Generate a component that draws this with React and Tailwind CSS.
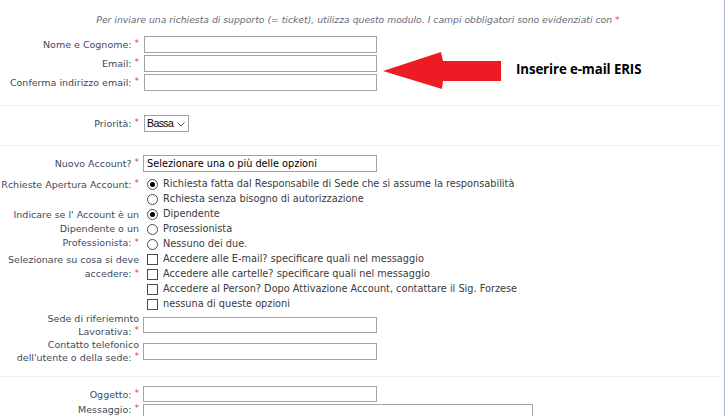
import React from "react";

const Star = () => <span className="text-[#e8424a] text-[9px] align-top ml-[3px] relative top-[-1px]">*</span>;

function Label({ children, className = "" }) {
  return (
    <div className={"text-right text-[#3e4a5c] leading-[13px] pr-[1px] " + className}>
      {children}
      <Star />
    </div>
  );
}

function TextInput({ w = "w-[233px]", h = "h-[17px]", children }) {
  return (
    <div className={`${w} ${h} border border-[#a3a3a3] bg-white flex items-center px-[2px] text-black text-[9.75px] leading-[12px] overflow-hidden whitespace-nowrap`}>
      {children}
    </div>
  );
}

function Radio({ checked }) {
  return (
    <span className="w-[11px] h-[11px] rounded-full border border-[#4a4a4a] flex items-center justify-center bg-white shrink-0">
      {checked && <span className="w-[5px] h-[5px] rounded-full bg-black" />}
    </span>
  );
}

function Check() {
  return <span className="w-[11px] h-[11px] border border-[#4a4a4a] bg-white shrink-0" />;
}

function Option({ kind, checked, children }) {
  return (
    <div className="h-[15px] flex items-center gap-[5px] pl-[4px] text-[#3b3b3b] text-[9.75px] whitespace-nowrap">
      {kind === "radio" ? <Radio checked={checked} /> : <Check />}
      <span>{children}</span>
    </div>
  );
}

function Row({ label, children, className = "", align = "items-center" }) {
  return (
    <div className={`grid grid-cols-[140px_1fr] gap-x-[3px] ${align} ${className}`}>
      {label}
      <div>{children}</div>
    </div>
  );
}

const Sep = ({ className = "" }) => <div className={"h-px bg-[#eceef1] w-[720px] " + className} />;

export default function App() {
  return (
    <div className="w-[728px] h-[416px] overflow-hidden bg-white relative font-['DejaVu_Sans',sans-serif] text-[9.5px]">
      <div className="w-[725px] -mt-[4px] pt-[4px] border-t border-r border-[#a6b4d4] rounded-tr-[6px] min-h-[440px]">
        <div className="pt-[13px] h-[30px] text-center italic text-[#666b78] text-[9.25px] leading-[12px] pr-[8px]">
          Per inviare una richiesta di supporto (= ticket), utilizza questo modulo. I campi obbligatori sono evidenziati con <span className="text-[#e8424a] not-italic">*</span>
        </div>

        <div className="mt-[5px] flex flex-col gap-[2px]">
          <Row label={<Label>Nome e Cognome:</Label>}><div className="pl-[1px]"><TextInput /></div></Row>
          <Row label={<Label>Email:</Label>}><div className="pl-[1px]"><TextInput /></div></Row>
          <Row label={<Label>Conferma indirizzo email:</Label>}><div className="pl-[1px]"><TextInput /></div></Row>
        </div>

        <Sep className="mt-[14px]" />

        <Row className="mt-[9px]" label={<Label>Priorità:</Label>}>
          <div className="pl-[1px]">
            <div className="w-[45px] h-[17px] border border-[#a3a3a3] flex items-center justify-between pl-[2px] pr-[3px] font-['Liberation_Sans',sans-serif] text-[10.5px] text-black tracking-[-0.6px]">
              <span>Bassa</span>
              <svg width="8" height="5" viewBox="0 0 8 5" className="mt-[1px]"><path d="M0.5 0.5 L4 4 L7.5 0.5" fill="none" stroke="#555" strokeWidth="1" /></svg>
            </div>
          </div>
        </Row>

        <Sep className="mt-[13px]" />

        <Row className="mt-[9px]" label={<Label>Nuovo Account?</Label>}>
          <TextInput w="w-[234px]"><span className="pl-[1px]">Selezionare una o più delle opzioni</span></TextInput>
        </Row>

        <div className="mt-[5px]">
          <Row align="items-start" label={<Label className="pt-[1px]">Rchieste Apertura Account:</Label>}>
            <Option kind="radio" checked>Richiesta fatta dal Responsabile di Sede che si assume la responsabilità</Option>
            <Option kind="radio">Rchiesta senza bisogno di autorizzazione</Option>
          </Row>
          <Row align="items-start" label={<Label className="pt-[1px] leading-[14px]">Indicare se l' Account è un<br />Dipendente o un<br />Professionista:</Label>}>
            <Option kind="radio" checked>Dipendente</Option>
            <Option kind="radio">Prosessionista</Option>
            <Option kind="radio">Nessuno dei due.</Option>
          </Row>
          <Row align="items-start" label={<Label className="pt-[1px] leading-[14px]">Selezionare su cosa si deve<br />accedere:</Label>}>
            <Option kind="check">Accedere alle E-mail? specificare quali nel messaggio</Option>
            <Option kind="check">Accedere alle cartelle? specificare quali nel messaggio</Option>
            <Option kind="check">Accedere al Person? Dopo Attivazione Account, contattare il Sig. Forzese</Option>
            <Option kind="check">nessuna di queste opzioni</Option>
          </Row>
        </div>

        <Row className="h-[26px]" label={<Label>Sede di riferiemnto<br />Lavorativa:</Label>}>
          <TextInput w="w-[234px]" h="h-[16px]" />
        </Row>
        <Row className="h-[26px]" label={<Label>Contatto telefonico<br />dell'utente o della sede:</Label>}>
          <TextInput w="w-[234px]" h="h-[17px]" />
        </Row>

        <Sep className="mt-[12px]" />

        <Row className="mt-[9px]" label={<Label>Oggetto:</Label>}>
          <TextInput w="w-[234px]" h="h-[16px]" />
        </Row>
        <Row className="mt-[2px]" align="items-start" label={<Label className="-mt-[1px]">Messaggio:</Label>}>
          <div className="w-[390px] h-[60px] border border-[#a3a3a3]" />
        </Row>
      </div>

      <svg className="absolute left-0 top-0 pointer-events-none" width="728" height="416">
        <polygon points="383,71 441,52 443,61 501,61 501,81 443,81 442,89" fill="#ed1c24" />
      </svg>
      <div className="absolute left-[516px] top-[60px] font-['Open_Sans',sans-serif] font-bold text-[13.25px] leading-[18px] text-black tracking-[-0.1px]">
        Inserire e-mail ERIS
      </div>
    </div>
  );
}
